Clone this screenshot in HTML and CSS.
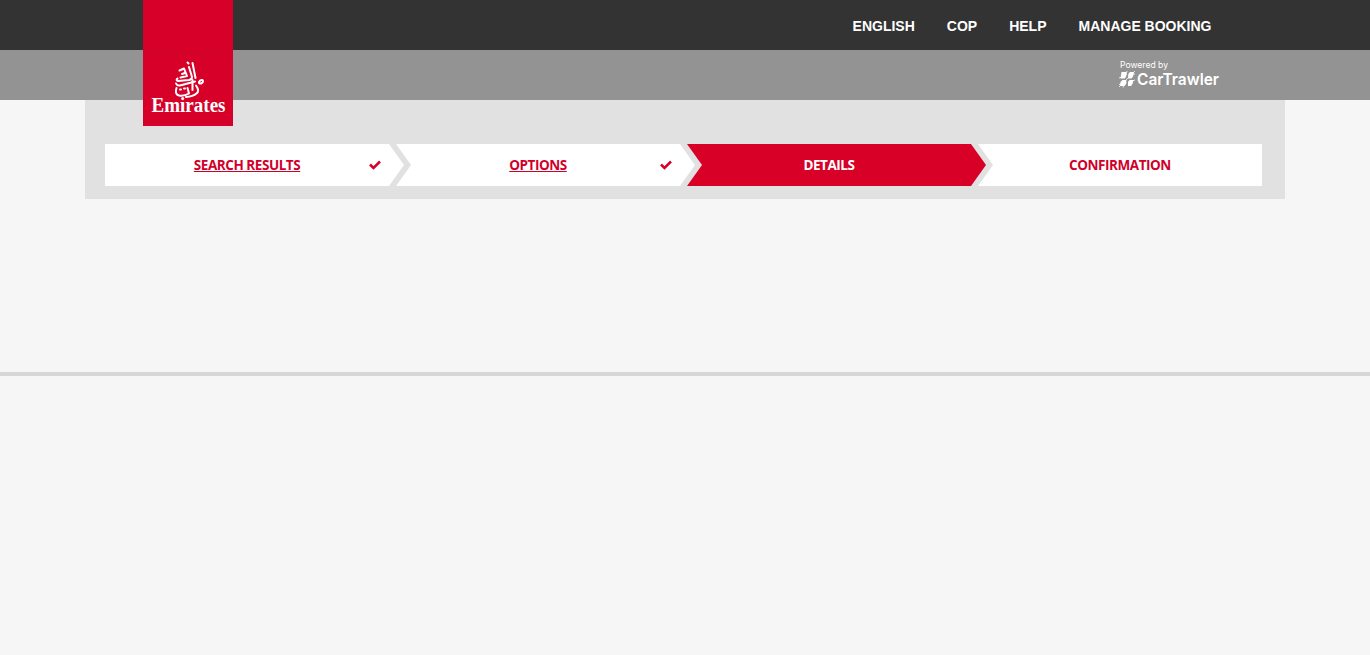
FILE: index.html
```html
<!DOCTYPE html>
<html lang="en">
<head>
<meta charset="utf-8">
<title>Emirates Car Rental</title>
<link rel="stylesheet" href="styles.css">
</head>
<body>
<header class="top">
  <nav class="nav">
    <a>ENGLISH</a><a>COP</a><a>HELP</a><a>MANAGE BOOKING</a>
  </nav>
  <div class="logo">
    <svg width="90" height="126" viewBox="0 0 90 126">
      <path d="M0 52.500H90M0 121.500H90" stroke="#c20d2c" stroke-width="1" opacity=".6"/>
      <g fill="none" stroke="#fff" stroke-width="2" stroke-linecap="round" stroke-linejoin="round">
        <path d="M44.500 62.500 L45.500 63.500"/>
        <path d="M49.500 63 L52.500 78"/>
        <path d="M46 67 L49 77 Q49 79.500 46 80 L35 81 Q32.500 80.500 34.500 78.500"/>
        <path d="M36.500 70.500 L41 68.500 L44 76 L37.500 77.500"/>
        <path d="M39 74 L42 73"/>
        <path d="M33 83.500 Q34 86 37 85.500 L52 81.500"/>
        <path d="M49.500 80 V90"/>
        <path d="M33.500 88 Q31.500 94.500 36 95.500 Q41 96.500 46 93.500 L44.500 88"/>
        <path d="M53 85.500 Q57 91 53.500 93.500 Q50 96.500 43 97"/>
        <path d="M56 83 Q56.500 79.500 59.500 80 Q61 82 58 83.500 Q56 84 56 82"/>
        <path d="M37 89.500 H38 M41 88.500 H42"/>
      </g>
      <text class="logo-name" x="8.500" y="112" textLength="74" lengthAdjust="spacingAndGlyphs">Emirates</text>
    </svg>
  </div>
</header>
<div class="subbar">
  <div class="powered">
    <svg width="104" height="36" viewBox="0 0 104 36">
      <text class="pow" x="2" y="10" textLength="48" lengthAdjust="spacingAndGlyphs">Powered by</text>
      <g fill="#fff">
        <path d="M3.500 14 H8.300 V18 L7 20.500 H2.500 Z"/>
        <path d="M10.300 16 L12 14 H16 L15 18.500 L13.500 20.500 H10 Z"/>
        <path d="M2.500 24 L4.500 22 H8.300 V25.500 L6.500 28 H2 Z"/>
        <path d="M10 24 L11.500 22 H15.500 L14.500 26 L13 28 H10 Z"/>
        <path d="M1 29 L17 13 M1 20 L7 18 M11 17 L17 16 M1 26.500 L7 25 M11 24 L17 22 M5 29.500 L6 26 M8 17 L9 13" stroke="#fff" stroke-width=".8"/>
      </g>
      <text class="brand" x="19" y="27" textLength="82" lengthAdjust="spacingAndGlyphs">CarTrawler</text>
    </svg>
  </div>
</div>
<main class="main">
  <div class="panel">
    <ol class="steps">
      <li class="step first"><a>SEARCH RESULTS</a><svg class="check" width="12" height="10" viewBox="0 0 12 10"><path d="M1 4.500 L4.500 8 L11 1.500"/></svg></li>
      <li class="step"><a>OPTIONS</a><svg class="check" width="12" height="10" viewBox="0 0 12 10"><path d="M1 4.500 L4.500 8 L11 1.500"/></svg></li>
      <li class="step active">DETAILS</li>
      <li class="step last">CONFIRMATION</li>
    </ol>
  </div>
</main>
</body>
</html>
```
FILE: styles.css
```css
* { box-sizing: border-box; }
body { margin: 0; background: #f6f6f6; font-family: "Open Sans", sans-serif; }
.top { position: relative; height: 50px; background: #333; padding-right: 158.500px; }
.nav {
  display: flex; justify-content: flex-end; align-items: center; gap: 32px;
  height: 52px; color: #fff; font: bold 14px "Liberation Sans", Arial, sans-serif;
}
.logo { position: absolute; left: 143px; top: 0; width: 90px; height: 126px; background: #d60029; }
.logo svg { display: block; }
.logo-name { font: bold 20px "Liberation Serif", serif; fill: #fff; }
.subbar { height: 50px; background: #939393; display: flex; justify-content: flex-end; padding: 8px 148px 0 0; }
.powered svg { display: block; overflow: visible; }
.pow { font: 9px Inter, sans-serif; fill: #fff; }
.brand { font: 600 16.500px Inter, sans-serif; fill: #fff; }
.main { height: 276px; border-bottom: 4px solid #d7d7d7; }
.panel { width: 1200px; height: 99px; margin: 0 auto; padding: 44px 23px 0 20px; background: #e1e1e1; }
.steps { display: flex; margin: 0; padding: 0; list-style: none; }
.step {
  position: relative; display: flex; flex: none; align-items: center; justify-content: center;
  width: 299px; height: 42px; padding: 0 15px 1px 0; margin-left: -8px;
  background: #fff; color: #d0002a; font-size: 13.500px; font-weight: 700; letter-spacing: -.45px;
  clip-path: polygon(0 0, 284px 0, 100% 50%, 284px 100%, 0 100%, 15px 50%);
}
.step a { text-decoration: underline; }
.first { margin-left: 0; clip-path: polygon(0 0, 284px 0, 100% 50%, 284px 100%, 0 100%); }
.active { background: #d80027; color: #fff; }
.last { width: 284px; padding-right: 0; clip-path: polygon(0 0, 100% 0, 100% 100%, 0 100%, 15px 50%); }
.check { position: absolute; right: 23px; top: 16px; }
.check path { fill: none; stroke: #d60029; stroke-width: 2.5; }
```
